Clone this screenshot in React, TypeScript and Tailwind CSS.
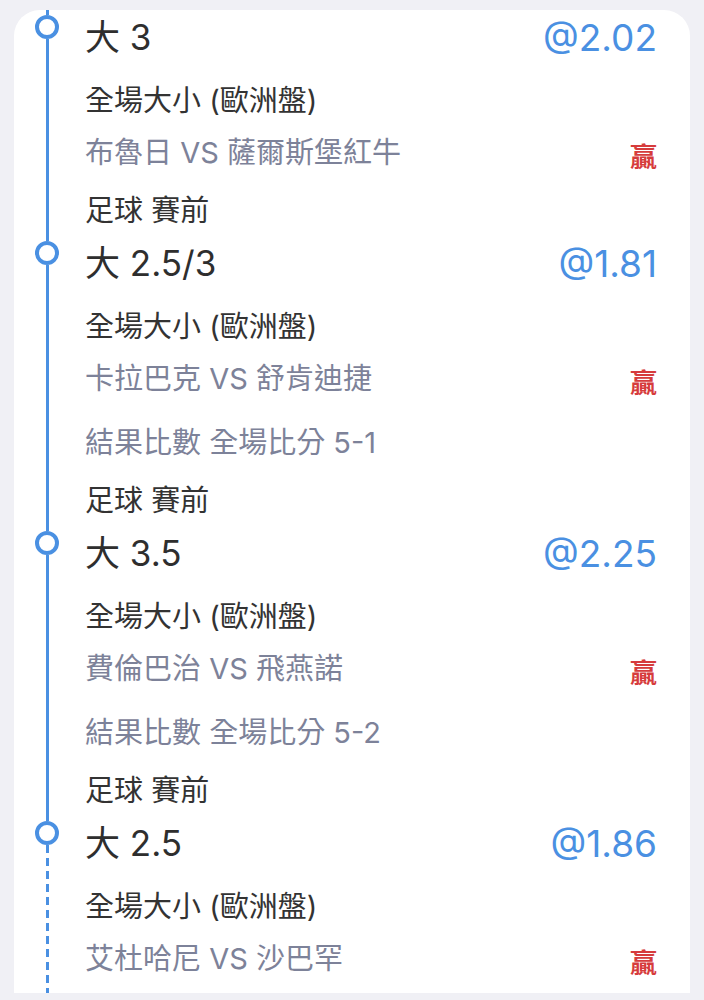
type Bet = {
  pick: string;
  odds: string;
  market: string;
  teams: string;
  result?: string;
  sport: string;
};

const bets: Bet[] = [
  { pick: '大 3', odds: '@2.02', market: '全場大小 (歐洲盤)', teams: '布魯日 VS 薩爾斯堡紅牛', sport: '足球 賽前' },
  { pick: '大 2.5/3', odds: '@1.81', market: '全場大小 (歐洲盤)', teams: '卡拉巴克 VS 舒肯迪捷', result: '結果比數 全場比分 5-1', sport: '足球 賽前' },
  { pick: '大 3.5', odds: '@2.25', market: '全場大小 (歐洲盤)', teams: '費倫巴治 VS 飛燕諾', result: '結果比數 全場比分 5-2', sport: '足球 賽前' },
  { pick: '大 2.5', odds: '@1.86', market: '全場大小 (歐洲盤)', teams: '艾杜哈尼 VS 沙巴罕', sport: '足球 賽前' },
];

const BetItem = ({ bet, last }: { bet: Bet; last: boolean }) => (
  <div className="flex">
    <div className="w-[71px] shrink-0 pl-[21px] flex">
      <div className="w-[24px] flex flex-col items-center">
        <div className="w-[3px] h-[5px] bg-[#4a90e2]" />
        <div className="w-[24px] h-[24px] rounded-full border-[4px] border-[#4a90e2] bg-white shrink-0" />
        {last ? (
          <div className="w-[3px] flex-1 bg-[linear-gradient(to_bottom,#4a90e2_0_8px,transparent_8px_13px)] bg-[length:3px_13px]" />
        ) : (
          <div className="w-[3px] flex-1 bg-[#4a90e2]" />
        )}
      </div>
    </div>
    <div className="flex-1 pr-[33px]">
      <div className="h-[54px] flex items-center justify-between leading-none">
        <span className="text-[35px] text-[#2e2e2e]">{bet.pick}</span>
        <span className="text-[37px] text-[#4a90e2]">{bet.odds}</span>
      </div>
      <div className="mt-[10px] h-[52px] flex items-center text-[29px] leading-none text-[#333333]">
        {bet.market}
      </div>
      <div className="h-[52px] flex items-center justify-between text-[29px] leading-none">
        <span className="text-[#7d8299]">{bet.teams}</span>
        <span className="mt-[10px] text-[27px] font-bold text-[#d63c3c]">贏</span>
      </div>
      {bet.result && (
        <div className="mt-[12px] h-[52px] flex items-center text-[29px] leading-none text-[#7d8299]">
          {bet.result}
        </div>
      )}
      {last ? (
        <div className="h-[60px]" />
      ) : (
        <div className="mt-[6px] h-[52px] flex items-center text-[29px] leading-none text-[#333333]">
          {bet.sport}
        </div>
      )}
    </div>
  </div>
);

export default function App() {
  return (
    <div className="h-[1000px] bg-[#f0f0f5] pt-[10px] pl-[14px] pr-[14px] pb-[7px] overflow-hidden font-['Inter','Noto_Sans_CJK_TC',sans-serif]">
      <div className="h-full bg-white rounded-t-[26px] overflow-hidden">
        {bets.map((bet, i) => (
          <BetItem key={i} bet={bet} last={i === bets.length - 1} />
        ))}
      </div>
    </div>
  );
}
